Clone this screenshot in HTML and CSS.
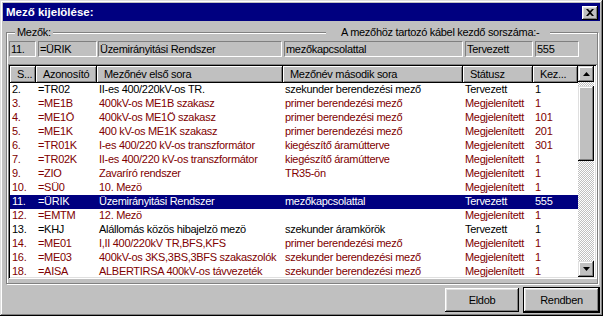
FILE: index.html
```html
<!DOCTYPE html>
<html lang="hu">
<head>
<meta charset="utf-8">
<title>Mező kijelölése</title>
<link rel="stylesheet" href="styles.css">
</head>
<body>
<div class="window">
  <div class="titlebar">
    <span class="title">Mező kijelölése:</span>
    <button class="close" aria-label="Bezár">
      <svg width="8" height="7" viewBox="0 0 8 7"><path d="M0 0h2l2 2 2-2h2L5 3.5 8 7H6L4 5 2 7H0l3-3.5z" fill="#000"/></svg>
    </button>
  </div>
  <div class="group">
    <span class="legend legend-left">Mezők:</span>
    <span class="legend legend-right">A mezőhöz tartozó kábel kezdő sorszáma:-</span>
    <div class="fields">
      <div class="field f1">11.</div>
      <div class="field f2">=ÜRIK</div>
      <div class="field f3">Üzemirányitási Rendszer</div>
      <div class="field f4">mezőkapcsolattal</div>
      <div class="field f5">Tervezett</div>
      <div class="field f6">555</div>
    </div>
    <div class="listbox">
      <div class="table">
        <div class="row head">
          <div class="hc">S...</div>
          <div class="hc">Azonosító</div>
          <div class="hc">Mezőnév első sora</div>
          <div class="hc">Mezőnév második sora</div>
          <div class="hc">Státusz</div>
          <div class="hc">Kez...</div>
        </div>
        <div class="row"><div>2.</div><div>=TR02</div><div>II-es 400/220kV-os TR.</div><div>szekunder berendezési mező</div><div>Tervezett</div><div>1</div></div>
        <div class="row red"><div>3.</div><div>=ME1B</div><div>400kV-os ME1B szakasz</div><div>primer berendezési mező</div><div>Megjelenített</div><div>1</div></div>
        <div class="row red"><div>4.</div><div>=ME1Ö</div><div>400kV-os ME1Ö szakasz</div><div>primer berendezési mező</div><div>Megjelenített</div><div>101</div></div>
        <div class="row red"><div>5.</div><div>=ME1K</div><div>400 kV-os ME1K szakasz</div><div>primer berendezési mező</div><div>Megjelenített</div><div>201</div></div>
        <div class="row red"><div>6.</div><div>=TR01K</div><div>I-es 400/220 kV-os transzformátor</div><div>kiegészítő áramútterve</div><div>Megjelenített</div><div>301</div></div>
        <div class="row red"><div>7.</div><div>=TR02K</div><div>II-es 400/220 kV-os transzformátor</div><div>kiegészítő áramútterve</div><div>Megjelenített</div><div>1</div></div>
        <div class="row red"><div>9.</div><div>=ZIO</div><div>Zavaríró rendszer</div><div>TR35-ön</div><div>Megjelenített</div><div>1</div></div>
        <div class="row red"><div>10.</div><div>=SÜ0</div><div>10. Mezö</div><div></div><div>Megjelenített</div><div>1</div></div>
        <div class="row sel"><div>11.</div><div>=ÜRIK</div><div>Üzemirányitási Rendszer</div><div>mezőkapcsolattal</div><div>Tervezett</div><div>555</div></div>
        <div class="row red"><div>12.</div><div>=EMTM</div><div>12. Mezö</div><div></div><div>Megjelenített</div><div>1</div></div>
        <div class="row"><div>13.</div><div>=KHJ</div><div>Alállomás közös hibajelzö mezö</div><div>szekunder áramkörök</div><div>Tervezett</div><div>1</div></div>
        <div class="row red"><div>14.</div><div>=ME01</div><div>I,II 400/220kV TR,BFS,KFS</div><div>primer berendezési mező</div><div>Megjelenített</div><div>1</div></div>
        <div class="row red"><div>16.</div><div>=ME03</div><div>400kV-os 3KS,3BS,3BFS szakaszolók</div><div>szekunder berendezési mező</div><div>Megjelenített</div><div>1</div></div>
        <div class="row red"><div>18.</div><div>=AISA</div><div>ALBERTIRSA 400kV-os távvezeték</div><div>szekunder berendezési mező</div><div>Megjelenített</div><div>1</div></div>
      </div>
      <div class="scrollbar">
        <div class="sbtn"><svg width="7" height="4" viewBox="0 0 7 4"><path d="M3.5 0L7 4H0z" fill="#000"/></svg></div>
        <div class="track"><div class="thumb"></div></div>
        <div class="sbtn"><svg width="7" height="4" viewBox="0 0 7 4"><path d="M0 0h7L3.5 4z" fill="#000"/></svg></div>
      </div>
    </div>
  </div>
  <div class="buttons">
    <button class="btn">Eldob</button>
    <button class="btn default">Rendben</button>
  </div>
</div>
</body>
</html>
```
FILE: styles.css
```css
html, body {
  margin: 0;
  padding: 0;
  background: #c0c0c0;
}
body {
  font-family: "Liberation Sans", Arial, sans-serif;
  font-size: 11px;
  letter-spacing: -0.3px;
  color: #000;
}
.window {
  width: 603px;
  height: 316px;
  box-sizing: border-box;
  padding: 3px;
  background: #c0c0c0;
  box-shadow: inset -1px -1px #000, inset 1px 1px #dfdfdf, inset -2px -2px #808080, inset 2px 2px #fff;
  display: flex;
  flex-direction: column;
}
.titlebar {
  height: 18px;
  background: #000080;
  color: #fff;
  display: flex;
  align-items: center;
  justify-content: space-between;
  padding: 0 2px 0 3px;
}
.title {
  font-weight: bold;
  font-size: 11.5px;
  letter-spacing: 0;
}
.close {
  width: 16px;
  height: 14px;
  padding: 0;
  margin-top: 1px;
  border: 0;
  background: #c0c0c0;
  box-shadow: inset -1px -1px #000, inset 1px 1px #fff, inset -2px -2px #808080, inset 2px 2px #dfdfdf;
  display: flex;
  align-items: center;
  justify-content: center;
}
.group {
  position: relative;
  margin: 11px 2px 0 3px;
  height: 252px;
  box-sizing: border-box;
  border: 1px solid #808080;
  box-shadow: inset 1px 1px #fff, 1px 1px #fff;
  padding: 8px 1px 0 1px;
}
.legend {
  position: absolute;
  top: -7px;
  height: 13px;
  line-height: 13px;
  background: #c0c0c0;
  white-space: nowrap;
}
.legend-left {
  left: 8px;
  padding: 0 2px;
}
.legend-right {
  left: 319px;
  width: 224px;
  box-sizing: border-box;
  padding-left: 15px;
}
.fields {
  display: flex;
  gap: 2px;
  margin-left: 1px;
  height: 16px;
}
.field {
  box-sizing: border-box;
  height: 16px;
  line-height: 14px;
  border: 1px solid;
  border-color: #808080 #fff #fff #808080;
  padding-left: 1px;
  white-space: nowrap;
  overflow: hidden;
}
.f1 { width: 27px; }
.f2 { width: 59px; margin-right: -1px; }
.f3 { width: 184px; }
.f4 { width: 179px; }
.f5 { width: 68px; }
.f6 { width: 44px; }
.listbox {
  margin-top: 7px;
  width: 589px;
  height: 215px;
  box-sizing: border-box;
  padding: 2px;
  background: #fff;
  box-shadow: inset 1px 1px #808080, inset -1px -1px #fff, inset 2px 2px #000, inset -2px -2px #dfdfdf;
  display: flex;
}
.table {
  width: 568px;
  overflow: hidden;
}
.row {
  display: grid;
  grid-template-columns: 26px 61px 186px 180px 70px 45px;
  height: 14px;
  line-height: 12px;
  white-space: nowrap;
}
.row > div {
  padding-left: 2px;
  overflow: hidden;
}
.row.red { color: #800000; }
.row.sel { background: #000080; color: #fff; }
.row.head {
  height: 17px;
  line-height: 17px;
  background: #c0c0c0;
}
.row.head > .hc {
  padding-left: 7px;
  box-shadow: inset -1px -1px #000, inset 1px 1px #fff, inset -2px -2px #808080;
  text-overflow: clip;
}
.scrollbar {
  width: 16px;
  display: flex;
  flex-direction: column;
}
.sbtn {
  width: 16px;
  height: 16px;
  flex: none;
  background: #c0c0c0;
  box-shadow: inset -1px -1px #000, inset 1px 1px #dfdfdf, inset -2px -2px #808080, inset 2px 2px #fff;
  display: flex;
  align-items: center;
  justify-content: center;
}
.track {
  flex: 1;
  background: repeating-conic-gradient(#c0c0c0 0 25%, #fff 0 50%) 0 0 / 2px 2px;
}
.thumb {
  margin-top: 4px;
  height: 75px;
  background: #c0c0c0;
  box-shadow: inset -1px -1px #000, inset 1px 1px #dfdfdf, inset -2px -2px #808080, inset 2px 2px #fff;
}
.buttons {
  display: flex;
  justify-content: flex-end;
  align-items: center;
  gap: 4px;
  margin-top: 3px;
  height: 26px;
}
.btn {
  font: inherit;
  letter-spacing: inherit;
  color: #000;
  width: 74px;
  height: 24px;
  padding: 0;
  border: 0;
  background: #c0c0c0;
  box-shadow: inset -1px -1px #000, inset 1px 1px #fff, inset -2px -2px #808080, inset 2px 2px #dfdfdf;
}
.btn.default {
  width: 77px;
  height: 26px;
  border: 1px solid #000;
}
```
